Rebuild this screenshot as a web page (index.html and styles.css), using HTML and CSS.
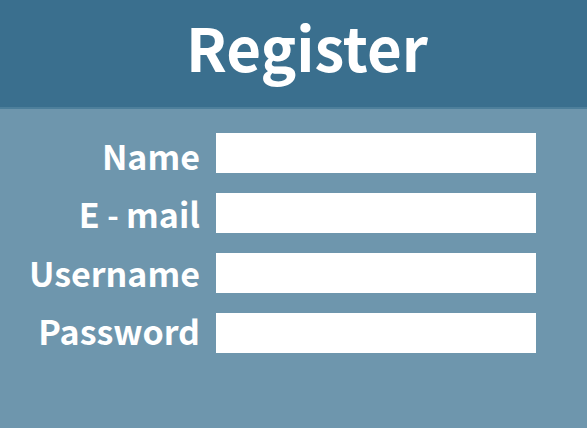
FILE: index.html
```html
<!DOCTYPE html>
<html lang="en">
<head>
<meta charset="utf-8">
<title>Register</title>
<link rel="stylesheet" href="styles.css">
</head>
<body>
<header class="header"><h1 class="title">Register</h1></header>
<form class="form">
<div class="labels">
<label class="label" for="name">Name</label>
<label class="label" for="email">E <span class="dash">-</span> mail</label>
<label class="label" for="username">Username</label>
<label class="label" for="password">Password</label>
</div>
<div class="fields">
<input class="field" id="name" type="text">
<input class="field" id="email" type="email">
<input class="field" id="username" type="text">
<input class="field" id="password" type="password">
</div>
</form>
</body>
</html>
```

FILE: styles.css
```css
* {
  box-sizing: border-box;
}

body {
  margin: 0;
  min-height: 100vh;
  background: #6e96ad;
  color: #fff;
  font-family: "Noto Sans CJK KR", "Open Sans", sans-serif;
}

.header {
  padding: 2px 0 17px 27px;
  background: #3a6f8e;
  border-bottom: 2px solid #4d7f9b;
  text-align: center;
}

.title {
  margin: 0;
  font-size: 60px;
  font-weight: 700;
  line-height: 88px;
}

.form {
  display: grid;
  grid-template-columns: 200px 1fr;
  column-gap: 16px;
  padding: 24px 51px 72px 0;
}

.labels,
.fields {
  display: flex;
  flex-direction: column;
}

.labels {
  gap: 18px;
  padding-top: 3px;
}

.fields {
  gap: 20px;
}

.label {
  font-size: 34px;
  font-weight: 700;
  line-height: 40px;
  text-align: right;
  white-space: nowrap;
}

.dash {
  font-family: "Open Sans", sans-serif;
  font-weight: 600;
}

.field {
  width: 100%;
  height: 40px;
  padding: 0 8px;
  border: 0;
  border-radius: 0;
  background: #fff;
  font: inherit;
  font-size: 24px;
}
```
